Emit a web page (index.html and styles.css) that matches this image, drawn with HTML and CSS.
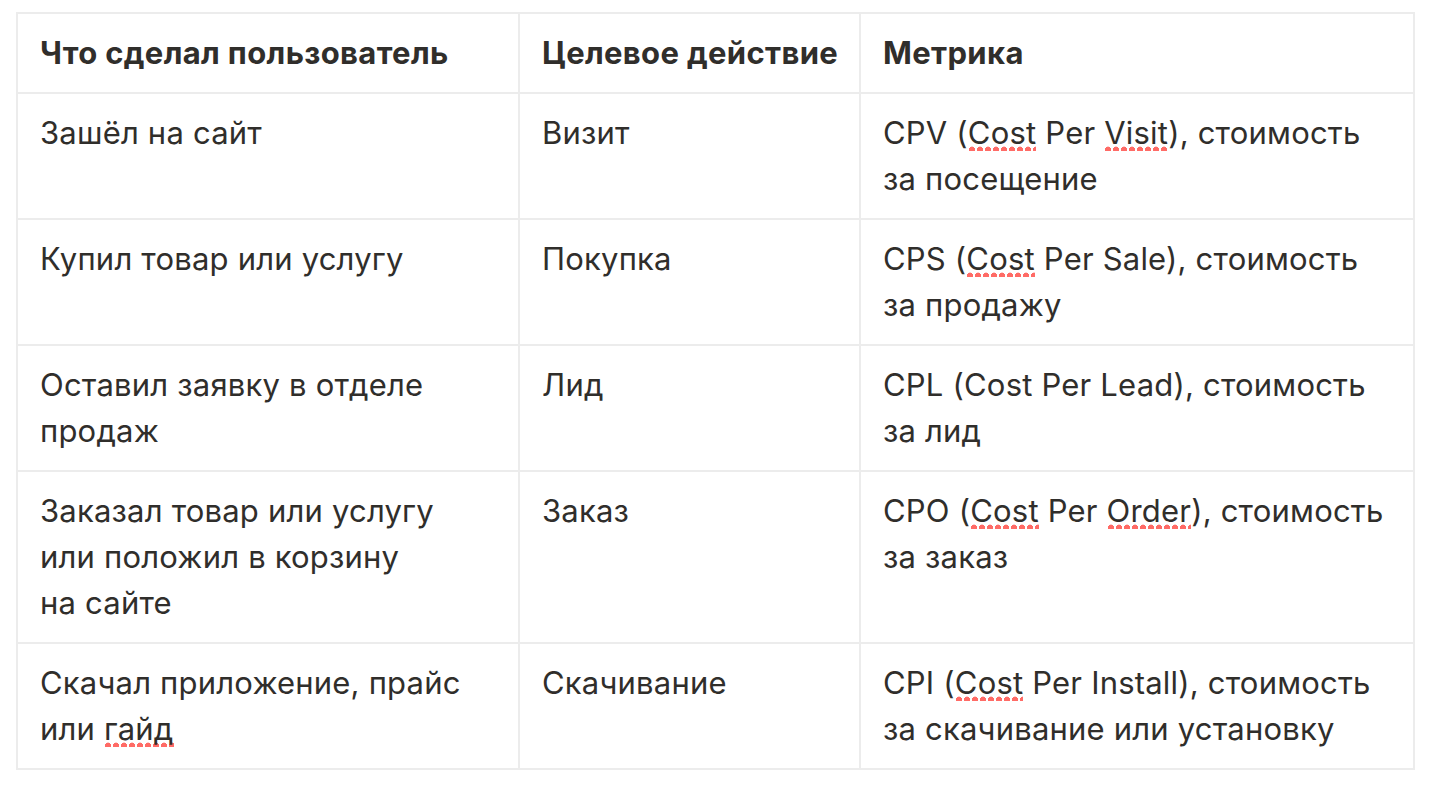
FILE: index.html
```html
<!DOCTYPE html>
<html lang="ru">
<head>
<meta charset="utf-8">
<link rel="stylesheet" href="styles.css">
</head>
<body>
<table class="metrics">
  <colgroup>
    <col class="c1">
    <col class="c2">
    <col class="c3">
  </colgroup>
  <thead>
    <tr>
      <th>Что сделал пользователь</th>
      <th>Целевое действие</th>
      <th>Метрика</th>
    </tr>
  </thead>
  <tbody>
    <tr>
      <td>Зашёл на сайт</td>
      <td>Визит</td>
      <td>CPV (<span class="sp">Cost</span> Per <span class="sp">Visit</span>), стоимость за&nbsp;посещение</td>
    </tr>
    <tr>
      <td>Купил товар или услугу</td>
      <td>Покупка</td>
      <td>CPS (<span class="sp">Cost</span> Per Sale), стоимость за&nbsp;продажу</td>
    </tr>
    <tr>
      <td>Оставил заявку в отделе продаж</td>
      <td>Лид</td>
      <td>CPL (Cost Per Lead), стоимость за&nbsp;лид</td>
    </tr>
    <tr>
      <td>Заказал товар или услугу<br>или положил в корзину<br>на&nbsp;сайте</td>
      <td>Заказ</td>
      <td>CPO (<span class="sp">Cost</span> Per <span class="sp">Order</span>), стоимость за&nbsp;заказ</td>
    </tr>
    <tr>
      <td>Скачал приложение, прайс или <span class="sp">гайд</span></td>
      <td>Скачивание</td>
      <td>CPI (<span class="sp">Cost</span> Per Install), стоимость за&nbsp;скачивание или установку</td>
    </tr>
  </tbody>
</table>
</body>
</html>
```
FILE: styles.css
```css
html, body {
  margin: 0;
  padding: 0;
  background: #ffffff;
}
body {
  padding: 12px 0 0 16px;
  font-family: Inter, "Noto Sans", sans-serif;
  color: #302e2b;
}
.metrics {
  border-collapse: collapse;
  table-layout: fixed;
  width: 1397px;
  border: 2px solid #ececec;
}
.c1 { width: 502px; }
.c2 { width: 341px; }
.c3 { width: 554px; }
.metrics th,
.metrics td {
  border: 2px solid #ececec;
  padding: 16px 18px 16px 22px;
  text-align: left;
  vertical-align: top;
  font-size: 31px;
  line-height: 46px;
}
.metrics th {
  font-weight: 700;
  letter-spacing: 0.35px;
}
.metrics td {
  font-weight: 400;
  letter-spacing: 0.2px;
}
.sp {
  background-image: radial-gradient(circle, #ff6b66 2.7px, transparent 3.2px);
  background-size: 8px 7px;
  background-repeat: repeat-x;
  background-position: 0 31.5px;
}
```
